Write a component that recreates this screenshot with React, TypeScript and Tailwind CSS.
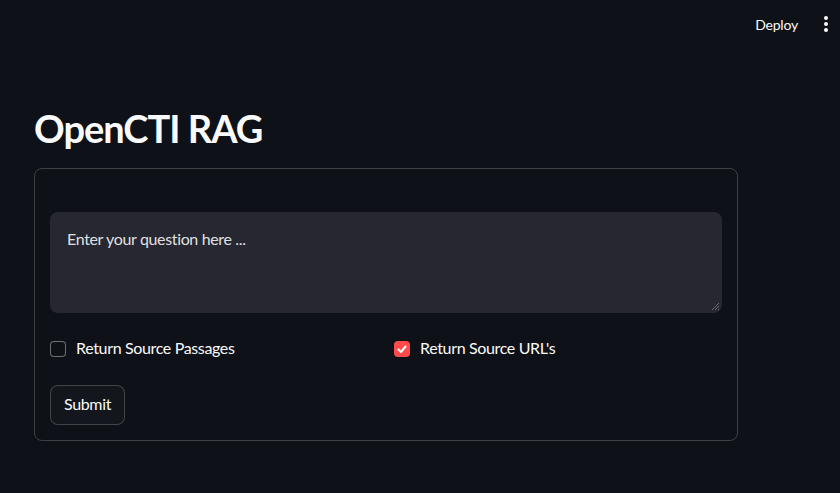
import React from "react";

export default function App() {
  const font = { fontFamily: 'Lato, "Noto Sans", sans-serif' };
  return (
    <div className="w-[840px] h-[493px] bg-[#0e1117] text-[#fafafa] overflow-hidden" style={font}>
      <div className="h-[48px] flex items-center justify-end pr-[4px]">
        <span className="text-[14px] text-[#fafafa] mr-[20px] mt-[1px] tracking-[-0.2px]">Deploy</span>
        <svg width="16" height="20" viewBox="0 0 16 20" className="mr-[2px]">
          <circle cx="8" cy="4" r="2" fill="#fafafa" />
          <circle cx="8" cy="10" r="2" fill="#fafafa" />
          <circle cx="8" cy="16" r="2" fill="#fafafa" />
        </svg>
      </div>
      <div className="pl-[34px] w-[738px]">
        <h1 className="text-[38px] font-bold leading-[52px] mt-[54px] mb-[14px] tracking-[-1px]">OpenCTI RAG</h1>
        <div className="border border-[rgba(250,250,250,0.2)] rounded-[8px] px-[15px] pt-[43px] pb-[15px] flex flex-col tracking-[-0.35px]">
          <div className="relative">
            <div className="h-[101px] bg-[#262730] rounded-[8px] px-[17px] pt-[15px] text-[16px] text-[rgba(250,250,250,0.9)] leading-[24px]">
              Enter your question here ...
            </div>
            <svg width="10" height="10" viewBox="0 0 10 10" className="absolute right-[2px] bottom-[2px]">
              <path d="M9 2 L2 9 M9 5 L5 9 M9 8 L8 9" stroke="#6b6c75" strokeWidth="1" />
            </svg>
          </div>
          <div className="grid grid-cols-2 gap-[16px] mt-[28px]">
            <div className="flex items-center gap-[10px] h-[16px]">
              <div className="w-[16px] h-[16px] rounded-[4px] border border-[rgba(250,250,250,0.4)] bg-[#0e1117]" />
              <span className="text-[16px] leading-[24px] -mt-[3px]">Return Source Passages</span>
            </div>
            <div className="flex items-center gap-[10px] h-[16px]">
              <div className="w-[16px] h-[16px] rounded-[4px] bg-[#ff4b4b] flex items-center justify-center">
                <svg width="10" height="8" viewBox="0 0 10 8">
                  <path d="M1 4 L4 7 L9 1" stroke="#ffffff" strokeWidth="2" fill="none" />
                </svg>
              </div>
              <span className="text-[16px] leading-[24px] -mt-[3px]">Return Source URL's</span>
            </div>
          </div>
          <div className="mt-[28px]">
            <button className="h-[40px] px-[13px] pb-[2px] rounded-[8px] border border-[rgba(250,250,250,0.2)] bg-[#13161d] text-[16px] text-[#fafafa]">
              Submit
            </button>
          </div>
        </div>
      </div>
    </div>
  );
}
